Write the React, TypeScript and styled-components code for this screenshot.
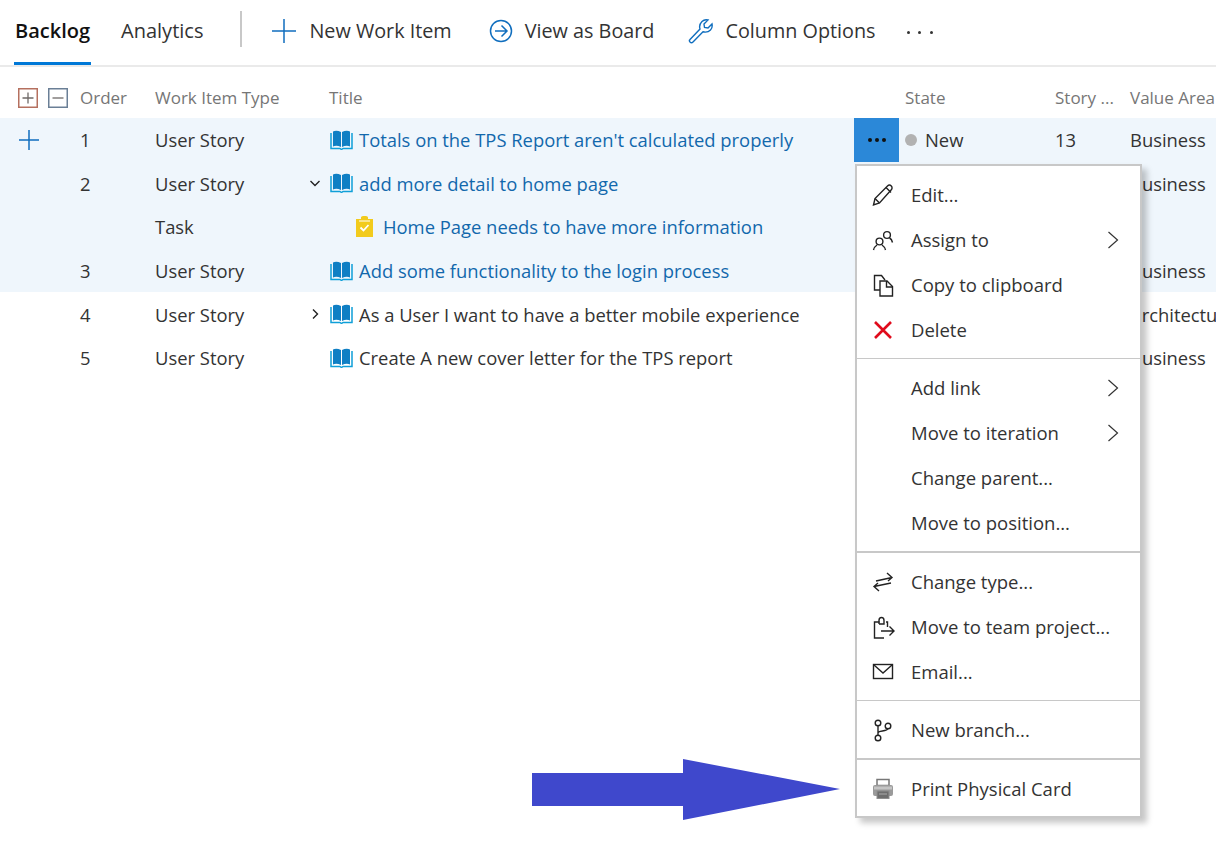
import React from "react";
import styled, { createGlobalStyle } from "styled-components";

const Global = createGlobalStyle`
  html, body { margin: 0; padding: 0; background: #fff; }
  body { font-family: "Open Sans", "Noto Sans", sans-serif; overflow: hidden; }
`;

const Page = styled.div`
  position: relative;
  width: 1216px;
  height: 867px;
  overflow: hidden;
  background: #fff;
  font-size: 18.4px;
  color: #333;
`;

const TopBar = styled.div`
  display: flex;
  align-items: center;
  height: 65px;
  border-bottom: 2px solid #eaeaea;
  padding-left: 14px;
  font-size: 19.8px;
`;

const Tab = styled.div<{ $active?: boolean }>`
  height: 64px;
  box-sizing: border-box;
  display: flex;
  align-items: center;
  padding: 0 1px 2px;
  margin-right: 29px;
  color: ${(p) => (p.$active ? "#111" : "#333")};
  font-weight: ${(p) => (p.$active ? 600 : 400)};
  font-size: 20px;
  border-bottom: 3px solid ${(p) => (p.$active ? "#0078d7" : "transparent")};
`;

const Divider = styled.div`
  width: 2px;
  height: 36px;
  background: #c8c8c8;
  margin: 0 30px 7px 7px;
`;

const Action = styled.div<{ $gap: number; $after: number }>`
  display: flex;
  align-items: center;
  gap: ${(p) => p.$gap}px;
  margin-right: ${(p) => p.$after}px;
  color: #333;
  padding-bottom: 4px;
`;

const More = styled.div`
  display: flex;
  gap: 8.500px;
  margin-bottom: 1px;
`;

const MoreDot = styled.span`
  width: 3px;
  height: 3px;
  border-radius: 50%;
  background: #333;
`;

const columns = "80px 75px 174px 525px 51px 150px 75px 1fr";

const HeaderRow = styled.div`
  display: grid;
  grid-template-columns: ${columns};
  align-items: center;
  height: 41px;
  padding-top: 10px;
  color: #767676;
  font-size: 17px;
`;

const ExpandTools = styled.div`
  display: flex;
  gap: 10px;
  padding-left: 18px;
`;

const Cell = styled.div`
  white-space: nowrap;
`;

const Row = styled.div<{ $selected?: boolean }>`
  display: grid;
  grid-template-columns: ${columns};
  align-items: center;
  height: 43.6px;
  background: ${(p) => (p.$selected ? "#eff6fc" : "#fff")};
`;

const AddCell = styled.div`
  padding-left: 19px;
  display: flex;
`;

const TitleCell = styled.div<{ $task?: boolean }>`
  position: relative;
  display: flex;
  align-items: center;
  gap: ${(p) => (p.$task ? "10px" : "6px")};
  padding-left: ${(p) => (p.$task ? "27px" : "1px")};
  white-space: nowrap;
`;

const Twist = styled.span`
  position: absolute;
  left: -20px;
  top: 50%;
  transform: translateY(-50%);
  display: flex;
`;

const Link = styled.span<{ $plain?: boolean }>`
  color: ${(p) => (p.$plain ? "#333" : "#1268ac")};
`;

const RowMenuButton = styled.div`
  width: 45px;
  height: 43.6px;
  background: #2b88d8;
  display: flex;
  align-items: center;
  justify-content: center;
  gap: 3px;
`;

const RowMenuDot = styled.span`
  width: 4px;
  height: 4px;
  border-radius: 50%;
  background: #111;
`;

const StateCell = styled.div`
  display: flex;
  align-items: center;
  gap: 8px;
`;

const StateDot = styled.span`
  width: 12px;
  height: 12px;
  border-radius: 50%;
  background: #b2b2b2;
`;

const Menu = styled.div`
  position: absolute;
  left: 855px;
  top: 164px;
  width: 283px;
  border: 2px solid #c8c8c8;
  background: #fff;
  box-shadow: 5px 5px 6px rgba(0, 0, 0, 0.22);
`;

const MenuSection = styled.div<{ $first?: boolean; $last?: boolean; $thin?: boolean }>`
  padding: 6px 0 ${(p) => (p.$last ? "5px" : "6px")};
  border-top: ${(p) => (p.$first ? "none" : p.$thin ? "1px solid #c8c8c8" : "2px solid #c8c8c8")};
`;

const MenuItem = styled.div`
  display: flex;
  align-items: center;
  height: 45px;
  color: #333;
  white-space: nowrap;
  font-size: 18.5px;
`;

const MenuIcon = styled.span`
  width: 52px;
  padding-right: 2px;
  display: flex;
  justify-content: center;
  flex: none;
`;

const MenuLabel = styled.span`
  flex: 1;
`;

const MenuChevron = styled.span`
  width: 54px;
  display: flex;
  justify-content: center;
  flex: none;
`;

const ArrowMark = styled.svg`
  position: absolute;
  left: 530px;
  top: 757px;
`;

const Ico: React.FC<{ w?: number; h?: number; children: React.ReactNode; color?: string; sw?: number }> = ({
  w = 24,
  h = 24,
  color = "#222",
  sw = 1.4,
  children,
}) => (
  <svg width={w} height={h} viewBox={`0 0 ${w} ${h}`} fill="none" stroke={color} strokeWidth={sw}>
    {children}
  </svg>
);

const Book = () => (
  <svg width="23" height="20" viewBox="0 0 23 20">
    <path d="M3 1.500c2-1 5-1 8 .5v15c-3-1.500-6-1.500-8-.5zM12 2c3-1.500 6-1.500 8-.5v15c-2-1-5-1-8 .5z" fill="#0f7fc4" />
    <path d="M1 3v15.500h9l1.500 1 1.500-1h9V3" fill="none" stroke="#0f9fd8" strokeWidth="1.500" />
  </svg>
);

const TaskIcon = () => (
  <svg width="17" height="21" viewBox="0 0 17 21">
    <path d="M0 3h5V1.500C5 .5 6 0 8.500 0S12 .5 12 1.500V3h5v18H0z" fill="#f2cb1d" />
    <path d="M4.500 11.500l3 3 5-5.500" fill="none" stroke="#fff" strokeWidth="1.800" />
    <path d="M3 5h11" stroke="#fff" strokeWidth="1" />
  </svg>
);

const Chevron = ({ down }: { down?: boolean }) => (
  <svg width="12" height="12" viewBox="0 0 12 12" fill="none" stroke="#222" strokeWidth="1.400">
    {down ? <path d="M1.500 4l4.500 4.500L10.500 4" /> : <path d="M4 1.500L8.500 6 4 10.500" />}
  </svg>
);

const MenuArrow = () => (
  <svg width="12" height="20" viewBox="0 0 12 20" fill="none" stroke="#333" strokeWidth="1.200">
    <path d="M1.500 2l9 8-9 8" />
  </svg>
);

const Plus = ({ s = 22 }: { s?: number }) => (
  <svg width={s} height={s} viewBox={`0 0 ${s} ${s}`} stroke="#106ebe" strokeWidth="1.500">
    <path d={`M${s / 2} 0v${s}M0 ${s / 2}h${s}`} />
  </svg>
);

const ExpandBox = ({ plus, color }: { plus?: boolean; color: string }) => (
  <svg width="20" height="20" viewBox="0 0 20 20" fill="none">
    <rect x=".75" y=".75" width="18.500" height="18.500" stroke={color} strokeWidth="1.500" />
    <path d={plus ? "M10 4.500v11M4.500 10h11" : "M4.500 10h11"} stroke="#6f6a68" strokeWidth="1.300" />
  </svg>
);

const icons: Record<string, React.ReactNode> = {
  edit: (
    <Ico>
      <path d="M2.500 22l1.500-6.500L16.500 3c1-1 2.800-1 3.800 0s1 2.800 0 3.800L8.500 20z" />
      <path d="M4 15.500l4.500 4.500M15 4.500l5 5" />
    </Ico>
  ),
  assign: (
    <Ico>
      <circle cx="8.500" cy="13.500" r="3.400" />
      <circle cx="16" cy="7" r="3.400" />
      <path d="M2.500 22c.5-2.500 2-4 3.500-5M11 17c1.500 1 3 2.500 3.500 5M18.500 10c1.500.7 2.500 2 3 4.500" />
    </Ico>
  ),
  copy: (
    <Ico>
      <path d="M9 17H3.500V2.500h7L14 7" />
      <path d="M9 8h7l5.500 5.500V23H9z" />
      <path d="M15.500 8v6h6" />
    </Ico>
  ),
  del: (
    <Ico color="#e00b1c" sw={2.6}>
      <path d="M4 4l16 16M20 4L4 20" />
    </Ico>
  ),
  change: (
    <Ico>
      <path d="M5 11L21 7.500M16 3l5 4.500-4 3.500" />
      <path d="M20 13L3 16.500M8 21l-5-4.500 4-3.500" />
    </Ico>
  ),
  move: (
    <Ico>
      <path d="M13 23H3.500V7H8.500M15 7H16.500V12" />
      <path d="M8 9V5.500C8 3.500 9 2.500 10.500 2.500S13 3.500 13 5.500V9H8" />
      <path d="M10 16h13M18.500 11.500l4.500 4.500-4.500 4.500" />
    </Ico>
  ),
  mail: (
    <Ico>
      <rect x="2.500" y="4.500" width="19" height="14" />
      <path d="M3 5l9 8 9-8" />
    </Ico>
  ),
  branch: (
    <Ico>
      <circle cx="7" cy="5" r="2.800" />
      <circle cx="7" cy="20" r="2.800" />
      <circle cx="17" cy="8" r="2.800" />
      <path d="M7 8v9M7 15c0-3 9-1 10-4.500" />
    </Ico>
  ),
  print: (
    <svg width="24" height="24" viewBox="0 0 24 24">
      <path d="M6 2.500h12v6H6z" fill="#fff" stroke="#777" strokeWidth="1.500" />
      <rect x="2" y="8" width="20" height="11" rx="2" fill="#9a9a9a" />
      <path d="M3 9.500h18v3H3z" fill="#c4c4c4" />
      <rect x="6" y="14" width="12" height="7.500" fill="#6e6e6e" stroke="#8e8e8e" />
      <path d="M8 17h8" stroke="#aaa" />
    </svg>
  ),
};

type Item = { label: string; icon?: string; sub?: boolean };
const sections: { thin?: boolean; items: Item[] }[] = [
  {
    items: [
      { label: "Edit...", icon: "edit" },
      { label: "Assign to", icon: "assign", sub: true },
      { label: "Copy to clipboard", icon: "copy" },
      { label: "Delete", icon: "del" },
    ],
  },
  {
    thin: true,
    items: [
      { label: "Add link", sub: true },
      { label: "Move to iteration", sub: true },
      { label: "Change parent..." },
      { label: "Move to position..." },
    ],
  },
  {
    items: [
      { label: "Change type...", icon: "change" },
      { label: "Move to team project...", icon: "move" },
      { label: "Email...", icon: "mail" },
    ],
  },
  { thin: true, items: [{ label: "New branch...", icon: "branch" }] },
  { items: [{ label: "Print Physical Card", icon: "print" }] },
];

const rows = [
  { order: "1", type: "User Story", title: "Totals on the TPS Report aren't calculated properly", sel: true, state: "New", pts: "13", area: "Business", first: true },
  { order: "2", type: "User Story", title: "add more detail to home page", sel: true, twist: "down", area: "Business" },
  { order: "", type: "Task", title: "Home Page needs to have more information", sel: true, task: true },
  { order: "3", type: "User Story", title: "Add some functionality to the login process", sel: true, area: "Business" },
  { order: "4", type: "User Story", title: "As a User I want to have a better mobile experience", twist: "right", area: "Architectural" },
  { order: "5", type: "User Story", title: "Create A new cover letter for the TPS report", area: "Business" },
];

export default function App() {
  return (
    <Page>
      <Global />
      <TopBar>
        <Tab $active>Backlog</Tab>
        <Tab>Analytics</Tab>
        <Divider />
        <Action $gap={13} $after={37}>
          <Plus s={24} />
          New Work Item
        </Action>
        <Action $gap={12} $after={34}>
          <Ico color="#106ebe" sw={1.5}>
            <circle cx="12" cy="12" r="10.500" />
            <path d="M6 12h12M12.500 6.500L18 12l-5.500 5.500" />
          </Ico>
          View as Board
        </Action>
        <Action $gap={11} $after={31}>
          <Ico w={26} h={26} color="#106ebe" sw={1.4}>
            <path d="M2 21.500L12 11c-1-3 0-5.500 2-7.500 1.500-1.500 4-2 6-1.500l-4 4 .5 3.500 3.500.5 4-4c.5 2.500 0 4.500-1.500 6-2 2-4.500 2.500-7.500 1.800L5 24c-1 1-2 1-3 0s-1-1.500 0-2.500z" />
          </Ico>
          Column Options
        </Action>
        <More>
          <MoreDot />
          <MoreDot />
          <MoreDot />
        </More>
      </TopBar>
      <HeaderRow>
        <ExpandTools>
          <ExpandBox plus color="#b5705f" />
          <ExpandBox color="#6a7f96" />
        </ExpandTools>
        <Cell>Order</Cell>
        <Cell>Work Item Type</Cell>
        <Cell>Title</Cell>
        <Cell />
        <Cell>State</Cell>
        <Cell>Story ...</Cell>
        <Cell>Value Area</Cell>
      </HeaderRow>
      {rows.map((r, i) => (
        <Row key={i} $selected={r.sel}>
          <AddCell>{r.first && <Plus s={20} />}</AddCell>
          <Cell>{r.order}</Cell>
          <Cell>{r.type}</Cell>
          <TitleCell $task={r.task}>
            {r.twist && (
              <Twist>
                <Chevron down={r.twist === "down"} />
              </Twist>
            )}
            {r.task ? <TaskIcon /> : <Book />}
            <Link $plain={!r.sel}>{r.title}</Link>
          </TitleCell>
          <Cell>
            {r.first && (
              <RowMenuButton>
                <RowMenuDot />
                <RowMenuDot />
                <RowMenuDot />
              </RowMenuButton>
            )}
          </Cell>
          <StateCell>
            {r.state && <StateDot />}
            {r.state}
          </StateCell>
          <Cell>{r.pts}</Cell>
          <Cell>{r.area}</Cell>
        </Row>
      ))}
      <Menu>
        {sections.map((s, i) => (
          <MenuSection key={i} $first={i === 0} $last={i === sections.length - 1} $thin={s.thin}>
            {s.items.map((it) => (
              <MenuItem key={it.label}>
                <MenuIcon>{it.icon && icons[it.icon]}</MenuIcon>
                <MenuLabel>{it.label}</MenuLabel>
                {it.sub && (
                  <MenuChevron>
                    <MenuArrow />
                  </MenuChevron>
                )}
              </MenuItem>
            ))}
          </MenuSection>
        ))}
      </Menu>
      <ArrowMark width="312" height="66" viewBox="0 0 312 66">
        <path d="M2 16H153V2L310 32 153 63V49H2z" fill="#3f48cc" />
      </ArrowMark>
    </Page>
  );
}
